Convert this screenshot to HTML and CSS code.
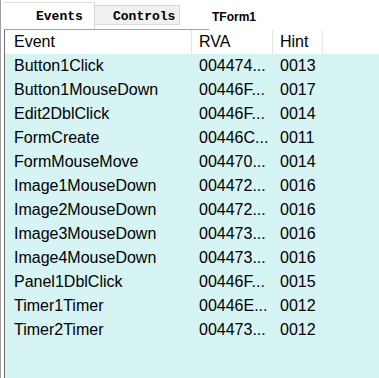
FILE: index.html
```
<!DOCTYPE html>
<html>
<head>
	<title>Events</title>
	<link rel="stylesheet" href="styles.css">
</head>
<body>
	<div class="frame">
		<div class="tabbar">
			<div class="tab active">Events</div>
			<div class="tab">Controls</div>
			<div class="caption">TForm1</div>
		</div>
		<div class="rule"></div>
		<div class="list">
			<div class="row head">
				<div class="cell c1">Event</div>
				<div class="cell c2">RVA</div>
				<div class="cell c3">Hint</div>
			</div>
			<div class="body">
				<div class="row"><div class="cell c1">Button1Click</div><div class="cell c2">004474...</div><div class="cell c3">0013</div></div>
				<div class="row"><div class="cell c1">Button1MouseDown</div><div class="cell c2">00446F...</div><div class="cell c3">0017</div></div>
				<div class="row"><div class="cell c1">Edit2DblClick</div><div class="cell c2">00446F...</div><div class="cell c3">0014</div></div>
				<div class="row"><div class="cell c1">FormCreate</div><div class="cell c2">00446C...</div><div class="cell c3">0011</div></div>
				<div class="row"><div class="cell c1">FormMouseMove</div><div class="cell c2">004470...</div><div class="cell c3">0014</div></div>
				<div class="row"><div class="cell c1">Image1MouseDown</div><div class="cell c2">004472...</div><div class="cell c3">0016</div></div>
				<div class="row"><div class="cell c1">Image2MouseDown</div><div class="cell c2">004472...</div><div class="cell c3">0016</div></div>
				<div class="row"><div class="cell c1">Image3MouseDown</div><div class="cell c2">004473...</div><div class="cell c3">0016</div></div>
				<div class="row"><div class="cell c1">Image4MouseDown</div><div class="cell c2">004473...</div><div class="cell c3">0016</div></div>
				<div class="row"><div class="cell c1">Panel1DblClick</div><div class="cell c2">00446F...</div><div class="cell c3">0015</div></div>
				<div class="row"><div class="cell c1">Timer1Timer</div><div class="cell c2">00446E...</div><div class="cell c3">0012</div></div>
				<div class="row"><div class="cell c1">Timer2Timer</div><div class="cell c2">004473...</div><div class="cell c3">0012</div></div>
			</div>
		</div>
	</div>
</body>
</html>
```
FILE: styles.css
```
* {
	box-sizing: border-box;
	margin: 0;
	padding: 0;
}

body {
	background-color: #fff;
	font-family: 'Liberation Sans', Arial, sans-serif;
	overflow: hidden;
}

.frame {
	height: 378px;
	border-left: 1px solid #a0a0a0;
	padding-left: 3px;
	display: flex;
	flex-direction: column;
}

.tabbar {
	height: 29px;
	display: flex;
	align-items: flex-start;
}

.tab {
	font-family: 'Liberation Mono', 'Courier New', monospace;
	font-weight: bold;
	font-size: 13px;
	color: #000;
}

.tab.active {
	width: 91px;
	height: 27px;
	margin-top: 2px;
	padding: 6px 0 0 32px;
	border-top: 1px solid #e0e0e0;
	border-right: 1px solid #d9d9d9;
}

.tab:not(.active) {
	width: 85px;
	height: 20px;
	margin-top: 5px;
	padding: 3px 0 0 18px;
	background-color: #f0f0f0;
	border: 1px solid #d9d9d9;
	border-left: none;
}

.caption {
	font-weight: bold;
	font-size: 12px;
	margin: 10px 0 0 32px;
}

.rule {
	width: 205px;
	height: 1px;
	background-color: #a0a0a0;
}

.list {
	flex: 1;
	display: flex;
	flex-direction: column;
	border-left: 1px solid #6d6d6d;
}

.row {
	display: grid;
	grid-template-columns: 187px 81px 50px 1fr;
	height: 24px;
	font-size: 16px;
	line-height: 24px;
	color: #000;
}

.row.head {
	background-color: #fff;
	line-height: 23px;
}

.head .cell {
	border-right: 1px solid #e5e5e5;
}

.cell {
	white-space: nowrap;
	overflow: hidden;
}

.c1 {
	padding-left: 9px;
}

.c2,
.c3 {
	padding-left: 7px;
}

.body {
	flex: 1;
	background-color: #d6f4f4;
}
```
